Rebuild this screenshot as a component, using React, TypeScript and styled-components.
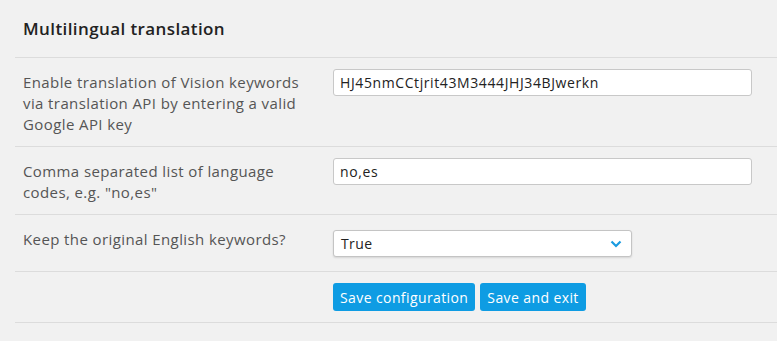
import React from "react";
import styled, { createGlobalStyle } from "styled-components";

const GlobalStyle = createGlobalStyle`
  html, body {
    margin: 0;
    padding: 0;
    background: #f1f1f1;
  }
  body {
    font-family: "Open Sans", "Noto Sans", sans-serif;
    letter-spacing: 0.4px;
  }
`;

const Section = styled.div`
  padding-left: 15px;
  background: #f1f1f1;
  min-height: 341px;
`;

const Header = styled.h2`
  margin: 0;
  height: 57px;
  display: flex;
  align-items: center;
  padding: 0 8px;
  font-size: 17px;
  font-weight: 600;
  color: #222;
  border-bottom: 1px solid #dcdcdc;
`;

const Row = styled.div`
  display: grid;
  grid-template-columns: 310px 419px;
  align-items: start;
  padding: 11px 25px 11px 8px;
  border-bottom: 1px solid #dcdcdc;
`;

const Label = styled.div`
  padding-top: 3px;
  padding-right: 10px;
  font-size: 15px;
  line-height: 21px;
  color: #555;
`;

const TextInput = styled.input`
  box-sizing: border-box;
  width: 100%;
  height: 27px;
  padding: 0 6px;
  border: 1px solid #c8c8c8;
  border-radius: 3px;
  background: #fff;
  font-family: inherit;
  font-size: 14px;
  letter-spacing: 0.6px;
  color: #222;
  outline: none;
`;

const SelectBox = styled.div`
  box-sizing: border-box;
  width: 299px;
  height: 27px;
  margin: 4px 0 3px;
  padding: 0 9px 0 7px;
  display: flex;
  align-items: center;
  justify-content: space-between;
  border: 1px solid #c4c4c4;
  border-radius: 3px;
  background: #fff;
  box-shadow: 0 1px 2px rgba(0, 0, 0, 0.12);
  font-size: 14px;
  color: #222;
`;

const Buttons = styled.div`
  display: flex;
  gap: 5px;
  grid-column: 2;
`;

const Button = styled.button`
  height: 28px;
  padding: 0 7px;
  border: 0;
  border-radius: 3px;
  background: #0e9ce3;
  color: #fff;
  font-family: inherit;
  font-size: 14px;
  letter-spacing: 0.4px;
  cursor: pointer;
`;

function Chevron() {
  return (
    <svg width="12" height="8" viewBox="0 0 12 8">
      <path d="M1.5 1.5 L6 6 L10.5 1.5" fill="none" stroke="#1a9be0" strokeWidth="2.2" />
    </svg>
  );
}

export default function App() {
  return (
    <>
      <GlobalStyle />
      <Section>
        <Header>Multilingual translation</Header>
        <Row>
          <Label>Enable translation of Vision keywords via translation API by entering a valid Google API key</Label>
          <TextInput defaultValue="HJ45nmCCtjrit43M3444JHJ34BJwerkn" />
        </Row>
        <Row>
          <Label>Comma separated list of language codes, e.g. "no,es"</Label>
          <TextInput defaultValue="no,es" />
        </Row>
        <Row>
          <Label>Keep the original English keywords?</Label>
          <SelectBox>
            <span>True</span>
            <Chevron />
          </SelectBox>
        </Row>
        <Row>
          <Buttons>
            <Button>Save configuration</Button>
            <Button>Save and exit</Button>
          </Buttons>
        </Row>
      </Section>
    </>
  );
}
